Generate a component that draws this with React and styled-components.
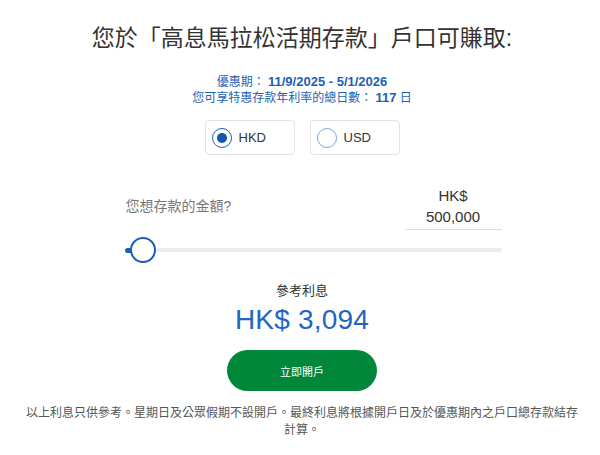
import React, { useState } from "react";
import styled, { createGlobalStyle } from "styled-components";

const Global = createGlobalStyle`
  html, body { margin: 0; padding: 0; background: #fff; }
  body { font-family: "Liberation Sans", Arial, "Noto Sans CJK TC", sans-serif; color: #333; }
`;

const Page = styled.div`
  width: 600px;
  height: 455px;
  display: flex;
  flex-direction: column;
  align-items: center;
  box-sizing: border-box;
  padding: 23px 16px 0 20px;
`;

const Title = styled.h1`
  margin: 0;
  font-size: 23px;
  line-height: 30px;
  font-weight: 400;
  color: #333;
  white-space: nowrap;
`;

const Info = styled.div`
  margin-top: 21px;
  display: flex;
  flex-direction: column;
  align-items: center;
  color: #1d5fb5;
  font-size: 12px;
  line-height: 15px;
`;

const Strong = styled.b`
  font-weight: 700;
  font-size: 13px;
`;

const RadioRow = styled.div`
  margin-top: 14px;
  display: flex;
  gap: 15px;
`;

const RadioBox = styled.label`
  width: 90px;
  height: 35px;
  box-sizing: border-box;
  border: 1px solid #e2e2e2;
  border-radius: 4px;
  display: flex;
  align-items: center;
  gap: 7px;
  padding-left: 6px;
  font-size: 13px;
  color: #333;
  cursor: pointer;
`;

const Circle = styled.span`
  width: 20px;
  height: 20px;
  box-sizing: border-box;
  border-radius: 50%;
  border: 1.5px solid ${(p) => (p.$on ? "#1a5fb4" : "#7ea8dc")};
  display: flex;
  align-items: center;
  justify-content: center;
  &::after {
    content: "";
    width: 10px;
    height: 10px;
    border-radius: 50%;
    background: ${(p) => (p.$on ? "#0f58b0" : "transparent")};
  }
`;

const AmountRow = styled.div`
  margin-top: 32px;
  margin-left: 22px;
  width: 377px;
  display: flex;
  align-items: center;
  justify-content: space-between;
`;

const AskLabel = styled.span`
  font-size: 14px;
  color: #777;
  padding-left: 1px;
  margin-bottom: 7px;
`;

const InputCol = styled.div`
  width: 97px;
  display: flex;
  flex-direction: column;
  align-items: center;
  border-bottom: 1px solid #dedede;
  padding-bottom: 4px;
`;

const Currency = styled.span`
  font-size: 15px;
  line-height: 18px;
  color: #333;
`;

const AmountValue = styled.span`
  margin-top: 3px;
  font-size: 15px;
  line-height: 17px;
  color: #333;
`;

const Slider = styled.div`
  margin-top: 7px;
  margin-left: 22px;
  width: 377px;
  height: 26px;
  position: relative;
  display: flex;
  align-items: center;
`;

const Track = styled.div`
  width: 100%;
  height: 4px;
  background: #ececec;
  border-radius: 2px;
`;

const Fill = styled.div`
  position: absolute;
  left: 0;
  top: 11px;
  height: 5px;
  background: #1a5fb4;
  border-radius: 3px 0 0 3px;
`;

const Thumb = styled.div`
  position: absolute;
  top: 0;
  width: 26px;
  height: 26px;
  box-sizing: border-box;
  border-radius: 50%;
  border: 2px solid #1a5fb4;
  background: #fff;
  transform: translateX(-50%);
`;

const RefLabel = styled.div`
  margin-top: 19px;
  font-size: 13px;
  line-height: 18px;
  color: #333;
`;

const Interest = styled.div`
  margin-top: 4px;
  font-size: 28px;
  line-height: 32px;
  color: #2166c2;
  font-family: "Liberation Sans", Arial, sans-serif;
  letter-spacing: 0.2px;
`;

const OpenButton = styled.button`
  margin-top: 14px;
  width: 150px;
  height: 41px;
  border: none;
  border-radius: 21px;
  background: #00873a;
  color: #fff;
  font-size: 11px;
  font-family: inherit;
  cursor: pointer;
`;

const Note = styled.p`
  margin: 14px 0 0;
  width: 560px;
  text-align: center;
  font-size: 12px;
  line-height: 17px;
  color: #555;
`;

export default function App() {
  const [cur, setCur] = useState("HKD");
  const pct = 5;
  return (
    <Page>
      <Global />
      <Title>您於「高息馬拉松活期存款」戶口可賺取:</Title>
      <Info>
        <span>
          優惠期： <Strong>11/9/2025 - 5/1/2026</Strong>
        </span>
        <span>
          您可享特惠存款年利率的總日數： <Strong>117</Strong> 日
        </span>
      </Info>
      <RadioRow>
        {["HKD", "USD"].map((c) => (
          <RadioBox key={c} onClick={() => setCur(c)}>
            <Circle $on={cur === c} />
            {c}
          </RadioBox>
        ))}
      </RadioRow>
      <AmountRow>
        <AskLabel>您想存款的金額?</AskLabel>
        <InputCol>
          <Currency>HK$</Currency>
          <AmountValue>500,000</AmountValue>
        </InputCol>
      </AmountRow>
      <Slider>
        <Track />
        <Fill style={{ width: `${pct}%` }} />
        <Thumb style={{ left: `${pct}%` }} />
      </Slider>
      <RefLabel>參考利息</RefLabel>
      <Interest>HK$ 3,094</Interest>
      <OpenButton>立即開戶</OpenButton>
      <Note>
        以上利息只供參考。星期日及公眾假期不設開戶。最終利息將根據開戶日及於優惠期內之戶口總存款結存計算。
      </Note>
    </Page>
  );
}
